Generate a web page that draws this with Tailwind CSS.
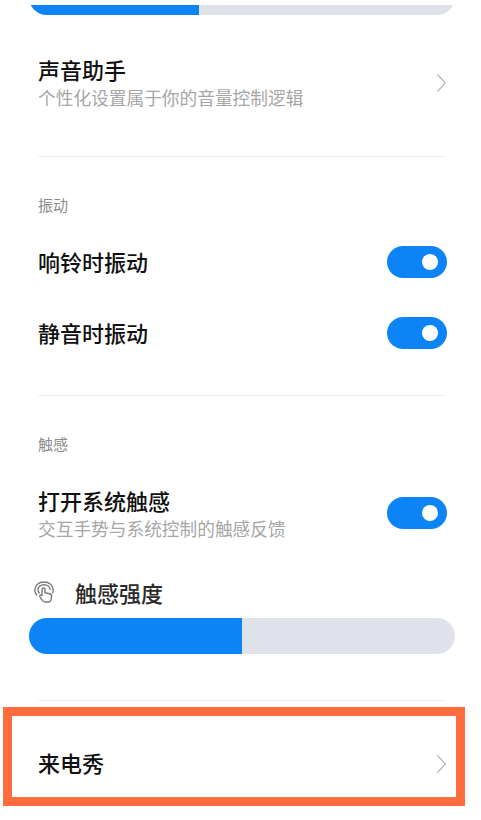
<!DOCTYPE html>
<html lang="zh-CN">
<head>
  <meta charset="UTF-8" />
  <meta name="viewport" content="width=device-width, initial-scale=1.0"/>
  <title>声音与振动</title>
  <script src="https://cdn.jsdelivr.net/npm/@tailwindcss/browser@4"></script>
</head>
<body class="bg-white">
  <main class="w-[481px] h-[820px] overflow-hidden bg-white font-['Noto_Sans_CJK_SC','Noto_Sans',sans-serif]">
    <!-- volume slider, cut off by the top of the screenshot -->
    <div class="h-[10px] mt-[5px] ml-[31px] w-[422px] overflow-hidden">
      <div class="flex h-[36px] w-[426px] -mt-[26px] -ml-[2px] rounded-full overflow-hidden bg-[#dfe2ea]">
        <div class="w-[170px] bg-[#0d84f5]"></div>
      </div>
    </div>

    <!-- voice assistant -->
    <div class="h-[142px] mr-[35px] ml-[38px] border-b border-[#eeeeee] flex items-start justify-between">
      <div class="pt-[36px]">
        <div class="text-[22px] leading-[36px] font-medium text-[#111]">声音助手</div>
        <div class="text-[17.7px] leading-[20px] text-[#a6a6a6]">个性化设置属于你的音量控制逻辑</div>
      </div>
      <svg class="mt-[59px]" width="9" height="18" viewBox="0 0 9 18" fill="none" stroke="#b4b4b4" stroke-width="1.2"><path d="M0.5 0.5L8.5 9L0.5 17.5"/></svg>
    </div>

    <!-- vibration -->
    <section class="h-[239px] ml-[38px] mr-[35px] border-b border-[#eeeeee]">
      <div class="text-[15px] leading-[20px] text-[#8c8c8c] pt-[38px] h-[58px]">振动</div>
      <div class="flex items-center justify-between h-[32px] mt-[31px] -mr-[1px]">
        <span class="text-[22px] font-medium text-[#111] -mt-[2px]">响铃时振动</span>
        <div class="flex items-center justify-end w-[60px] h-[32px] rounded-full bg-[#0d84f5] pr-[9px]"><span class="w-[16px] h-[16px] rounded-full bg-white"></span></div>
      </div>
      <div class="flex items-center justify-between h-[32px] mt-[39px] -mr-[1px]">
        <span class="text-[22px] font-medium text-[#111] -mt-[2px]">静音时振动</span>
        <div class="flex items-center justify-end w-[60px] h-[32px] rounded-full bg-[#0d84f5] pr-[9px]"><span class="w-[16px] h-[16px] rounded-full bg-white"></span></div>
      </div>
    </section>

    <!-- haptics -->
    <section class="ml-[38px] mr-[35px] h-[305px] border-b border-[#eeeeee]">
      <div class="text-[15px] leading-[20px] text-[#8c8c8c] pt-[38px] h-[58px]">触感</div>
      <div class="flex items-start justify-between mt-[31px] -mr-[1px]">
        <div>
          <div class="text-[22px] leading-[30px] font-medium text-[#111]">打开系统触感</div>
          <div class="text-[17.7px] leading-[26px] text-[#a6a6a6]">交互手势与系统控制的触感反馈</div>
        </div>
        <div class="flex items-center justify-end w-[60px] h-[32px] rounded-full bg-[#0d84f5] pr-[9px] mt-[12px]"><span class="w-[16px] h-[16px] rounded-full bg-white"></span></div>
      </div>
      <div class="flex items-center gap-[21px] h-[32px] mt-[35px] -ml-[4px]">
        <svg class="-mt-[1px]" width="20" height="22" viewBox="0 0 20 22" fill="none" stroke="#7a7a7a" stroke-width="1.4" stroke-linecap="round" stroke-linejoin="round">
          <path d="M2.6 14C1.4 12.4 .8 10.6 .8 8.8C.8 4.4 4.8 1 10 1C15.2 1 19.2 4.4 19.2 8.8C19.2 10 19 11 18.6 12"/>
          <path d="M5.2 12C4.4 11 4 9.8 4 8.6C4 5.8 6.6 3.8 10 3.8C13.4 3.8 16 5.8 16 8.6"/>
          <path d="M8 13.4V8.2C8 6.6 11 6.6 11 8.2V11.8L15.6 12.8C17 13.1 17.8 14 17.6 15.4L17 19.2C16.8 20.4 16 21 14.8 21H11.2C10.2 21 9.4 20.6 8.8 19.8L6 16.2C5 14.8 6.8 13.2 8 14.6"/>
        </svg>
        <span class="text-[22px] font-medium text-[#2b2b2b]">触感强度</span>
      </div>
      <div class="flex h-[36px] w-[426px] mt-[10px] -ml-[9px] rounded-full overflow-hidden bg-[#dfe2ea]">
        <div class="w-[213px] bg-[#0d84f5]"></div>
      </div>
    </section>

    <!-- incoming call show, highlighted with an orange frame -->
    <div class="mt-[6px] ml-[3px] w-[462px] h-[99px] border-[9px] border-[#ff6c3e] flex items-center justify-between pt-[14px] pl-[26px] pr-[10px]">
      <span class="text-[22px] font-medium text-[#111] -mt-[2px]">来电秀</span>
      <svg width="9" height="18" viewBox="0 0 9 18" fill="none" stroke="#b4b4b4" stroke-width="1.2"><path d="M0.5 0.5L8.5 9L0.5 17.5"/></svg>
    </div>
  </main>
</body>
</html>
